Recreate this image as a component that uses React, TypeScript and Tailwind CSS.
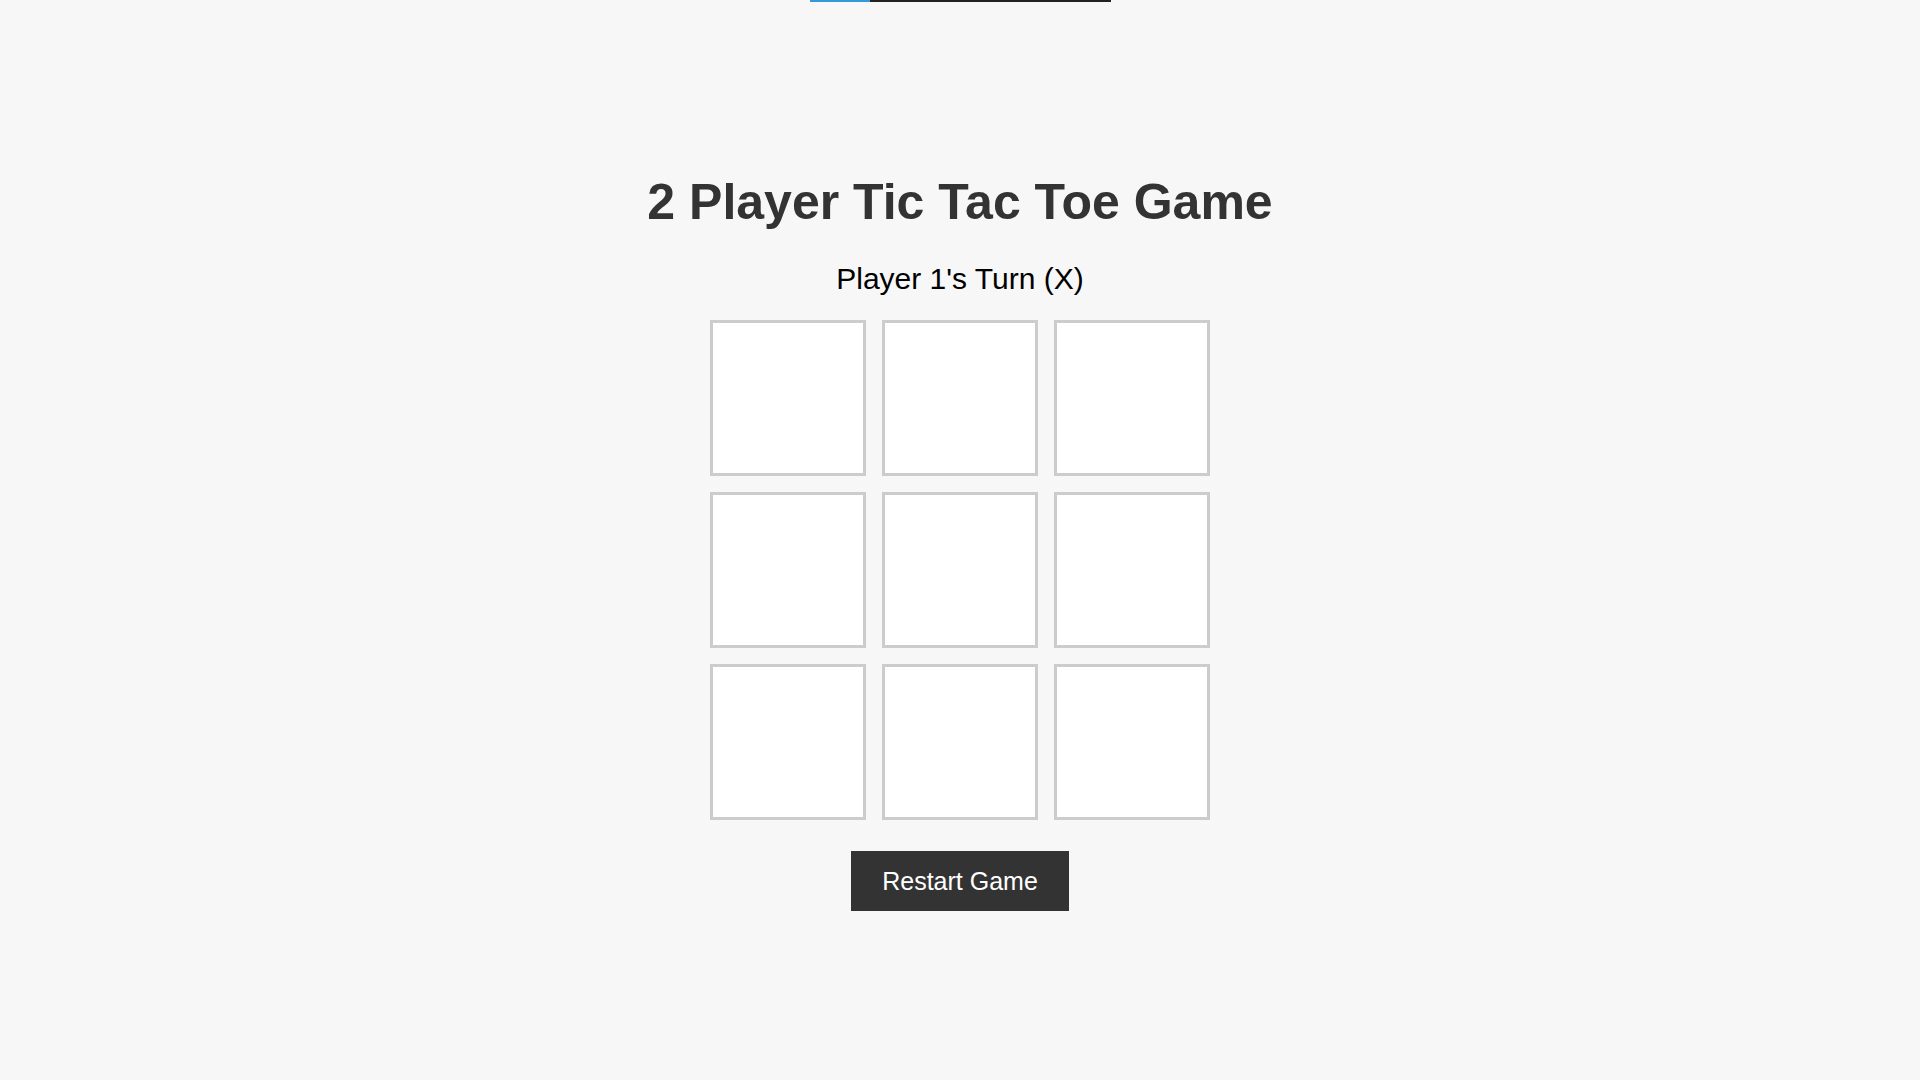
import React from "react";

export default function App() {
  const cells = Array.from({ length: 9 });
  return (
    <div
      className="min-h-[1080px] w-full bg-[#f7f7f7] flex flex-col items-center"
      style={{ fontFamily: '"Liberation Sans", Arial, sans-serif' }}
    >
      <div className="flex w-[301px] h-[2px]">
        <div className="w-[60px] h-full bg-[#3498db]" />
        <div className="flex-1 h-full bg-[#222222]" />
      </div>
      <h1 className="mt-[171px] text-[50px] leading-[58px] font-bold text-[#333333]">
        2 Player Tic Tac Toe Game
      </h1>
      <p className="mt-[31px] text-[30px] leading-[34px] text-black">
        Player 1's Turn (X)
      </p>
      <div className="mt-[24px] grid grid-cols-[repeat(3,156px)] gap-[16px]">
        {cells.map((_, i) => (
          <div
            key={i}
            className="w-[156px] h-[156px] bg-white border-[3px] border-[#cccccc]"
          />
        ))}
      </div>
      <button className="mt-[31px] h-[60px] px-[31px] bg-[#333333] text-white text-[25px] leading-[29px]">
        Restart Game
      </button>
    </div>
  );
}
